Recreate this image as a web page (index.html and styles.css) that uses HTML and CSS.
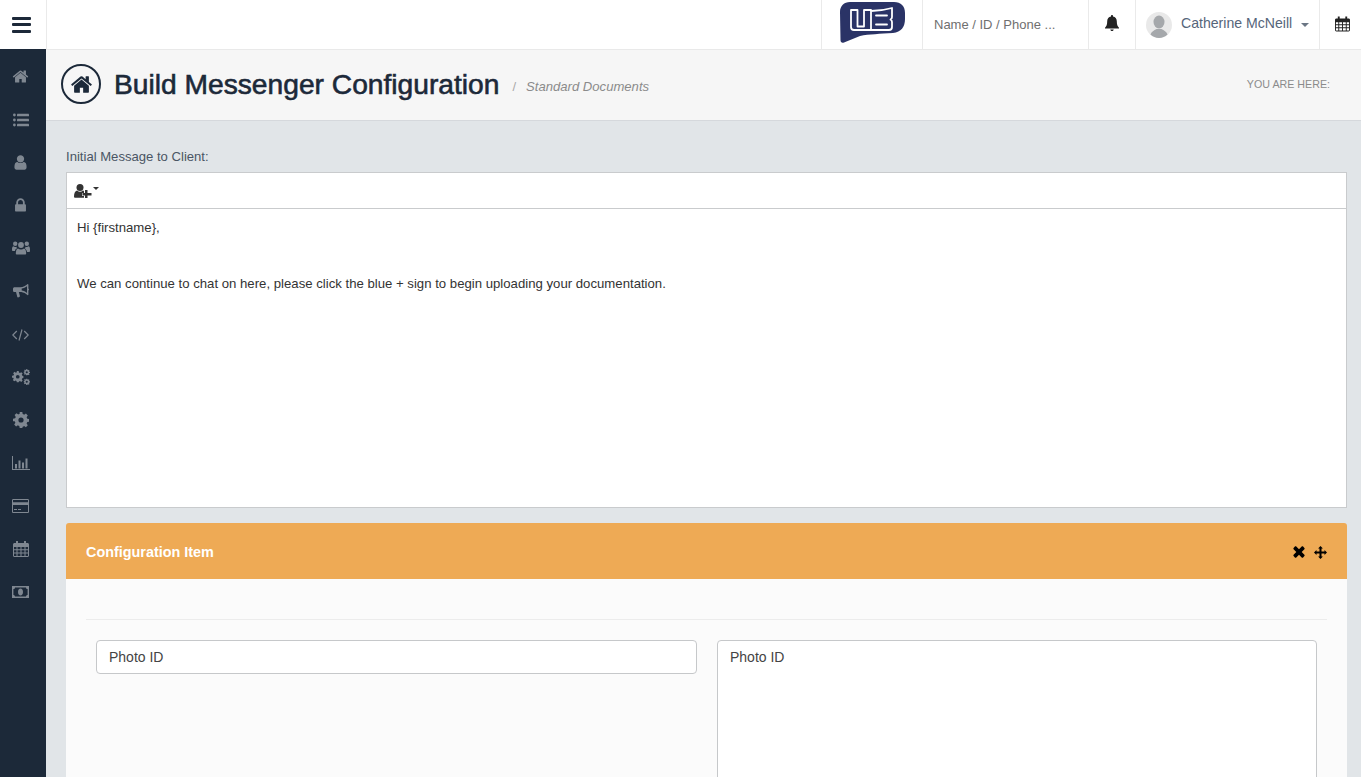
FILE: index.html
```html
<!DOCTYPE html>
<html lang="en">
<head>
<meta charset="utf-8">
<title>Build Messenger Configuration</title>
<link rel="stylesheet" href="styles.css">
</head>
<body>
<svg class="defs" width="0" height="0" aria-hidden="true">
  <symbol id="i-home" viewBox="0 0 1792 1792"><path d="M1472 992v480q0 26-19 45t-45 19h-384v-384H768v384H384q-26 0-45-19t-19-45V992q0-1 .5-3t.5-3l575-474 575 474q1 2 1 6zm223-69l-62 74q-8 9-21 11h-3q-13 0-21-7L896 424l-692 577q-12 8-24 7-13-2-21-11l-62-74q-8-10-7-23.500t11-21.500l719-599q32-26 76-26t76 26l244 204V288q0-14 9-23t23-9h192q14 0 23 9t9 23v408l219 182q10 8 11 21.500t-7 23.500z"/></symbol>
  <symbol id="i-user" viewBox="0 0 1792 1792"><path d="M1536 1399q0 109-62.500 187t-150.500 78H469q-88 0-150.500-78T256 1399q0-85 8.500-160.500t31.500-152 58.500-131 94-89T583 832q131 128 313 128t313-128q76 0 134.500 34.500t94 89 58.500 131 31.500 152 8.500 160.500zm-256-887q0 159-112.500 271.500T896 896 624.500 783.500 512 512t112.500-271.500T896 128t271.500 112.500T1280 512z"/></symbol>
  <symbol id="i-lock" viewBox="0 0 1792 1792"><path d="M640 768h512V576q0-106-75-181t-181-75-181 75-75 181v192zm832 96v576q0 40-28 68t-68 28H416q-40 0-68-28t-28-68V864q0-40 28-68t68-28h32V576q0-184 132-316t316-132 316 132 132 316v192h32q40 0 68 28t28 68z"/></symbol>
  <symbol id="i-list" viewBox="0 0 16 14"><circle cx="1.400" cy="2" r="1.400"/><circle cx="1.400" cy="7" r="1.400"/><circle cx="1.400" cy="12" r="1.400"/><rect x="4" y="0.800" width="12" height="2.500" rx=".4"/><rect x="4" y="5.800" width="12" height="2.500" rx=".4"/><rect x="4" y="10.800" width="12" height="2.500" rx=".4"/></symbol>
  <symbol id="i-group" viewBox="0 0 18 14"><circle cx="9" cy="4" r="2.900"/><path d="M4.600 13.500c-.5 0-.8-.3-.8-.8 0-3 .8-5 2.200-5.200.8.700 1.900 1.100 3 1.100s2.200-.4 3-1.100c1.400.2 2.200 2.200 2.200 5.200 0 .5-.3.800-.8.800z"/><circle cx="3.200" cy="2.800" r="2.200"/><circle cx="14.800" cy="2.800" r="2.200"/><path d="M0 8.500c0-1.700.5-3 1.400-3.200.6.500 1.200.8 1.900.8.500 0 .9-.1 1.300-.3-.1.800.1 1.300.6 1.800C4 7.300 3.200 8.500 3 10H1c-.6 0-1-.5-1-1.500zM18 8.500c0-1.700-.5-3-1.400-3.200-.6.500-1.200.8-1.900.8-.5 0-.9-.1-1.300-.3.100.8-.1 1.300-.6 1.800 1.200.7 2 1.900 2.200 3.400h2c.6 0 1-.5 1-1.500z"/></symbol>
  <symbol id="i-bullhorn" viewBox="0 0 16 14"><path d="M14.600 0c.5 0 .8.400.8.800v3.800c.4.200.6.600.6 1s-.2.800-.6 1v3.800c0 .4-.3.800-.8.800-1.800-1.600-4-2.800-6.400-3.100H5.800L6.900 12c.1.400-.1.700-.4.800l-1.300.6c-.4.100-.7 0-.9-.4L3 8H1.600C.7 8 0 7.300 0 6.400V4.800C0 3.900.7 3.200 1.600 3.200h5.800C10 3.200 12.800 1.700 14.600 0zm-.6 2.300c-1.500 1.100-3.400 2-5.300 2.300v2c1.900.3 3.800 1.200 5.300 2.300z"/></symbol>
  <symbol id="i-code" viewBox="0 0 17 12"><path d="M4.800 2 .8 6l4 4M12.200 2l4 4-4 4M10 .5l-3 11" fill="none" stroke="currentColor" stroke-width="1.200"/></symbol>
  <symbol id="i-gear" viewBox="0 0 16 16"><path fill-rule="evenodd" d="M6.700 0h2.600l.4 2.100c.5.200 1 .4 1.400.7l1.800-1.200 1.900 1.900-1.200 1.800c.3.400.5.900.7 1.400l2.100.4v2.600l-2.100.4c-.2.500-.4 1-.7 1.400l1.200 1.800-1.900 1.900-1.800-1.200c-.4.300-.9.500-1.400.7L9.300 16H6.700l-.4-2.100c-.5-.2-1-.4-1.400-.7l-1.800 1.200-1.900-1.900 1.200-1.800c-.3-.4-.5-.9-.7-1.400L0 9.300V6.700l2.100-.4c.2-.5.4-1 .7-1.400L1.600 3.100l1.900-1.900 1.800 1.200c.4-.3.9-.5 1.400-.7zM8 5.400a2.600 2.600 0 1 0 0 5.200 2.600 2.600 0 0 0 0-5.200z"/></symbol>
  <symbol id="i-gears" viewBox="0 0 18 16">
    <use href="#i-gear" x="0" y="2" width="11.500" height="11.500"/>
    <use href="#i-gear" x="11.500" y="0" width="6.500" height="6.500"/>
    <use href="#i-gear" x="11.500" y="9.500" width="6.500" height="6.500"/>
  </symbol>
  <symbol id="i-chart" viewBox="0 0 18 14"><path d="M0 0h1v13h17v1H0z"/><rect x="3" y="8" width="2" height="4.500"/><rect x="6.500" y="4.500" width="2" height="8"/><rect x="10" y="6.500" width="2" height="6"/><rect x="13.500" y="2.500" width="2" height="10"/></symbol>
  <symbol id="i-card" viewBox="0 0 17 14"><path fill-rule="evenodd" d="M1.300 0h14.400c.7 0 1.300.6 1.300 1.300v11.400c0 .7-.6 1.300-1.300 1.300H1.300C.6 14 0 13.400 0 12.700V1.300C0 .6.600 0 1.300 0zm-.3 1v2.200h15V1zm0 5v7h15V6z"/><rect x="2" y="10" width="3" height="1"/><rect x="6" y="10" width="3" height="1"/></symbol>
  <symbol id="i-cal" viewBox="0 0 16 16"><path fill-rule="evenodd" d="M3 0h2v2h6V0h2v2h1.500c.8 0 1.500.7 1.500 1.500v11c0 .8-.7 1.500-1.500 1.500h-13C.7 16 0 15.300 0 14.500v-11C0 2.700.7 2 1.500 2H3zM1 6v2.200h2.500V6zm3.500 0v2.200H7.500V6zm4 0v2.200h3V6zm4 0v2.200H15V6zM1 9.200v2.200h2.500V9.200zm3.500 0v2.200H7.500V9.200zm4 0v2.200h3V9.200zm4 0v2.200H15V9.200zM1 12.400V15h2.500v-2.600zm3.500 0V15H7.500v-2.600zm4 0V15h3v-2.600zm4 0V15H15v-2.600z"/></symbol>
  <symbol id="i-money" viewBox="0 0 17 12"><path fill-rule="evenodd" d="M0 0h17v12H0zm3 1.500c0 1-.7 1.600-1.600 1.600v5.800c.9 0 1.600.7 1.600 1.600h11c0-.9.700-1.600 1.600-1.600V3.100c-.9 0-1.600-.6-1.600-1.600zM8.500 2.500C10 2.500 11 4 11 6s-1 3.500-2.500 3.500S6 8 6 6s1-3.500 2.500-3.500z"/><rect x="7.900" y="3.800" width="1.200" height="4.400"/></symbol>
  <symbol id="i-bell" viewBox="0 0 14 16"><path d="M7 0c.6 0 1 .4 1 1v.6c2.300.4 3.800 2.200 3.800 4.700 0 3.500.7 5 2.200 6.500v.7H0v-.7c1.500-1.500 2.200-3 2.200-6.500C2.200 3.800 3.700 2 6 1.600V1c0-.6.400-1 1-1zM5.300 14.500h3.400C8.700 15.400 8 16 7 16s-1.700-.6-1.700-1.500z"/></symbol>
  <symbol id="i-times" viewBox="0 0 12 12"><path d="M3.300.6 6 3.300 8.700.6c.4-.4 1-.4 1.400 0l1.300 1.300c.4.400.4 1 0 1.400L8.700 6l2.700 2.700c.4.400.4 1 0 1.400l-1.300 1.300c-.4.400-1 .4-1.400 0L6 8.700l-2.700 2.700c-.4.400-1 .4-1.400 0L.6 10.100c-.4-.4-.4-1 0-1.400L3.300 6 .6 3.300c-.4-.4-.4-1 0-1.400L1.900.6c.4-.4 1-.4 1.400 0z"/></symbol>
  <symbol id="i-move" viewBox="0 0 14 14"><path d="M7 0l2.600 2.700H8.100v3.200h3.200V4.400L14 7l-2.700 2.600V8.100H8.100v3.200h1.500L7 14l-2.600-2.700h1.500V8.100H2.700v1.500L0 7l2.700-2.600v1.500h3.200V2.700H4.400z"/></symbol>
</svg>

<header class="topbar">
  <button class="menu-toggle" type="button" aria-label="Menu"><span></span><span></span><span></span></button>
  <div class="topbar-fill"></div>
  <div class="cell logo-cell">
    <svg class="logo" viewBox="0 0 65 41">
      <path fill="#2a3366" d="M10 0h44c7 0 11 4 11 11v6c0 8-4 13-12 14-13 1-24 1-33 3L4 40.500c-2 .6-3.500 0-3.500-2.500L0 10C0 4 4 0 10 0z"/>
      <path fill="none" stroke="#fff" stroke-width="1.800" stroke-linejoin="round" stroke-linecap="round" d="M11 8h6.500v16.500h6.500V8h7v20H14c-2 0-3-1-3-3zM31 9c8 0 14-1 21-3v9c0 1.500-.5 2-1.500 2.500 1 .5 1.500 1 1.500 2.500v5c0 2-1 3-3 3H31M36 13.500h11M36 22.500h11"/>
    </svg>
  </div>
  <div class="cell search-cell">Name / ID / Phone ...</div>
  <div class="cell bell-cell"><svg class="ico bell"><use href="#i-bell"/></svg></div>
  <div class="cell user-cell">
    <svg class="avatar" viewBox="0 0 26 26">
      <circle cx="13" cy="13" r="13" fill="#e9e9e9"/>
      <ellipse cx="13" cy="10" rx="5.500" ry="6.500" fill="#a5a8ab"/>
      <path fill="#a5a8ab" d="M4.500 22.500c1-3 3.500-4 6-5.500h5c2.500 1.500 5 2.500 6 5.500-2.300 2.200-5.200 3.500-8.500 3.500s-6.200-1.300-8.500-3.500z"/>
    </svg>
    <span class="user-name">Catherine McNeill</span>
    <span class="caret"></span>
  </div>
  <div class="cell cal-cell"><svg class="ico cal"><use href="#i-cal"/></svg></div>
</header>

<div class="shell">
  <nav class="sidebar">
    <svg class="nav-ico home"><use href="#i-home"/></svg>
    <svg class="nav-ico list"><use href="#i-list"/></svg>
    <svg class="nav-ico user"><use href="#i-user"/></svg>
    <svg class="nav-ico lock"><use href="#i-lock"/></svg>
    <svg class="nav-ico group"><use href="#i-group"/></svg>
    <svg class="nav-ico horn"><use href="#i-bullhorn"/></svg>
    <svg class="nav-ico code"><use href="#i-code"/></svg>
    <svg class="nav-ico gears"><use href="#i-gears"/></svg>
    <svg class="nav-ico gear"><use href="#i-gear"/></svg>
    <svg class="nav-ico chart"><use href="#i-chart"/></svg>
    <svg class="nav-ico card"><use href="#i-card"/></svg>
    <svg class="nav-ico calendar"><use href="#i-cal"/></svg>
    <svg class="nav-ico money"><use href="#i-money"/></svg>
  </nav>

  <main class="main">
    <div class="page-head">
      <div class="head-icon"><svg class="head-home"><use href="#i-home"/></svg></div>
      <h1>Build Messenger Configuration</h1>
      <span class="slash">/</span>
      <span class="subtitle">Standard Documents</span>
      <span class="crumb">YOU ARE HERE:</span>
    </div>

    <div class="content">
      <div class="field-label">Initial Message to Client:</div>
      <div class="editor">
        <div class="editor-bar">
          <svg class="ed-user" viewBox="0 0 18 14">
            <circle cx="6" cy="3.500" r="3.500"/>
            <path d="M0 12.500c0-3.500 1-5.500 3-6 1 .8 2 1.200 3 1.200s2-.4 3-1.200l1 .5V9h-2v3h2v1.800H1.300C.5 13.800 0 13.300 0 12.500z"/>
            <path d="M11 6h2.500v3H17.500v2.500h-4v2.500H11v-2.500H8.500V9H11z"/>
          </svg>
          <span class="ed-caret"></span>
        </div>
        <div class="editor-body">
          <p>Hi {firstname},</p>
          <p class="spaced">We can continue to chat on here, please click the blue + sign to begin uploading your documentation.</p>
        </div>
      </div>

      <section class="panel">
        <div class="panel-head">
          <span class="panel-title">Configuration Item</span>
          <svg class="ico times"><use href="#i-times"/></svg>
          <svg class="ico move"><use href="#i-move"/></svg>
        </div>
        <div class="panel-body">
          <div class="rule"></div>
          <div class="item-row">
            <div class="text-input">Photo ID</div>
            <div class="text-area">Photo ID</div>
          </div>
        </div>
      </section>
    </div>
  </main>
</div>
</body>
</html>
```
FILE: styles.css
```css
* { box-sizing: border-box; }
html, body { margin: 0; height: 100%; overflow: hidden; }
body { font-family: "Liberation Sans", Arial, sans-serif; font-size: 13px; color: #333; background: #e1e5e8; }
.defs { position: absolute; }

.topbar { display: flex; height: 49px; background: #fff; }
.menu-toggle { width: 47px; height: 49px; padding: 0 0 0 12px; margin: 0; border: 0; border-right: 1px solid #eaeaea; background: #fff; display: flex; flex-direction: column; justify-content: center; gap: 3.500px; }
.menu-toggle span { display: block; width: 19px; height: 3px; background: #1d2939; border-radius: 1px; }
.topbar-fill { flex: 1; }
.cell { height: 49px; display: flex; align-items: center; border-left: 1px solid #eaeaea; }
.logo-cell { width: 101px; padding-left: 18px; }
.logo { width: 65px; height: 41px; margin-top: -4px; }
.search-cell { width: 166px; padding-left: 11px; font-size: 13px; color: #6f6f6f; }
.bell-cell { width: 47px; justify-content: center; }
.user-cell { width: 184px; padding-left: 10px; }
.cal-cell { width: 42px; padding-left: 15px; }
.ico { display: block; fill: #222; }
.bell { width: 14px; height: 16px; margin-top: -3px; }
.cal { width: 15px; height: 16px; margin-top: -1px; }
.avatar { width: 26px; height: 26px; flex: none; }
.user-name { margin-left: 9px; font-size: 14.100px; color: #56657a; white-space: nowrap; margin-top: -3px; }
.caret { margin-left: 9px; border-top: 4px solid #6b7684; border-left: 4px solid transparent; border-right: 4px solid transparent; }

.shell { display: flex; height: 728px; }
.sidebar { width: 46px; flex: none; background: #1c2939; display: flex; flex-direction: column; align-items: center; padding-top: 5.500px; }
.nav-ico { display: block; width: 16px; height: 16px; margin: 13.500px 0 13.500px -5px; fill: #7f8791; color: #7f8791; }
.nav-ico.home { width: 17px; height: 17px; margin-top: 13px; margin-bottom: 13px; }
.nav-ico.list { width: 16px; height: 14px; margin-top: 15px; margin-bottom: 14px; }
.nav-ico.user, .nav-ico.lock { width: 17px; height: 17px; margin-top: 13px; margin-bottom: 13px; }
.nav-ico.group { width: 18px; height: 16px; }
.nav-ico.gears { width: 18px; height: 16px; }
.nav-ico.chart { width: 18px; height: 14px; margin-top: 14.500px; margin-bottom: 14.500px; }
.nav-ico.card { width: 17px; height: 14px; margin-top: 14.500px; margin-bottom: 14.500px; }
.nav-ico.money { width: 17px; height: 12px; margin-top: 15.500px; margin-bottom: 15.500px; }
.nav-ico.code { width: 17px; height: 12px; margin-top: 16px; margin-bottom: 15px; }

.main { flex: 1; min-width: 0; }
.page-head { height: 72px; background: #f6f6f6; border-top: 1px solid #e9e9e9; border-bottom: 1px solid #d5d8dc; display: flex; align-items: center; padding: 0 31px 2px 15px; }
.head-icon { width: 40px; height: 40px; border: 2px solid #1c2939; border-radius: 50%; display: flex; align-items: center; justify-content: center; flex: none; }
.head-home { width: 23px; height: 23px; fill: #1c2939; }
h1 { margin: -1px 0 0 13px; font-size: 28.200px; font-weight: 400; color: #1c2939; -webkit-text-stroke: .6px #1c2939; white-space: nowrap; line-height: 34px; }
.slash { margin-left: 13px; color: #a9a9a9; font-size: 13px; padding-top: 4px; }
.subtitle { margin-left: 10px; font-size: 13.100px; font-style: italic; color: #8b8b8b; padding-top: 4px; }
.crumb { margin-left: auto; font-size: 10.700px; color: #8b8b8b; }

.content { padding: 29px 14px 0 20px; }
.field-label { font-size: 13.100px; color: #4a5564; line-height: 14px; margin-bottom: 8px; }
.editor { background: #fff; border: 1px solid #c9cbcd; height: 336px; }
.editor-bar { height: 36px; border-bottom: 1px solid #c9cbcd; display: flex; align-items: center; padding-left: 7px; }
.ed-user { width: 18px; height: 14px; fill: #333; }
.ed-caret { margin-left: 1px; margin-top: -4px; border-top: 3px solid #333; border-left: 3px solid transparent; border-right: 3px solid transparent; }
.editor-body { padding: 10px; font-size: 13.180px; line-height: 18px; color: #333; }
.editor-body p { margin: 0; }
.editor-body .spaced { margin-top: 38px; }

.panel { margin-top: 15px; }
.panel-head { height: 56px; background: #eeaa55; border-radius: 3px 3px 0 0; display: flex; align-items: center; padding: 0 20px; }
.panel-title { font-size: 14.400px; font-weight: 700; color: #fff; flex: 1; margin-top: 2px; }
.times { width: 12px; height: 12px; fill: #000; margin-top: 2px; }
.move { width: 13px; height: 13px; fill: #000; margin-left: 9px; margin-top: 2px; }
.panel-body { background: #fbfbfb; padding: 40px 20px 0; height: 300px; }
.rule { height: 1px; background: #ececec; }
.item-row { display: grid; grid-template-columns: 601px 600px; column-gap: 20px; padding: 20px 10px 0; align-items: start; }
.text-input, .text-area { background: #fff; border: 1px solid #c6c8ca; border-radius: 4px; padding: 8px 12px; font-size: 14px; line-height: 16px; color: #444; }
.text-input { height: 34px; }
.text-area { height: 200px; }
```
